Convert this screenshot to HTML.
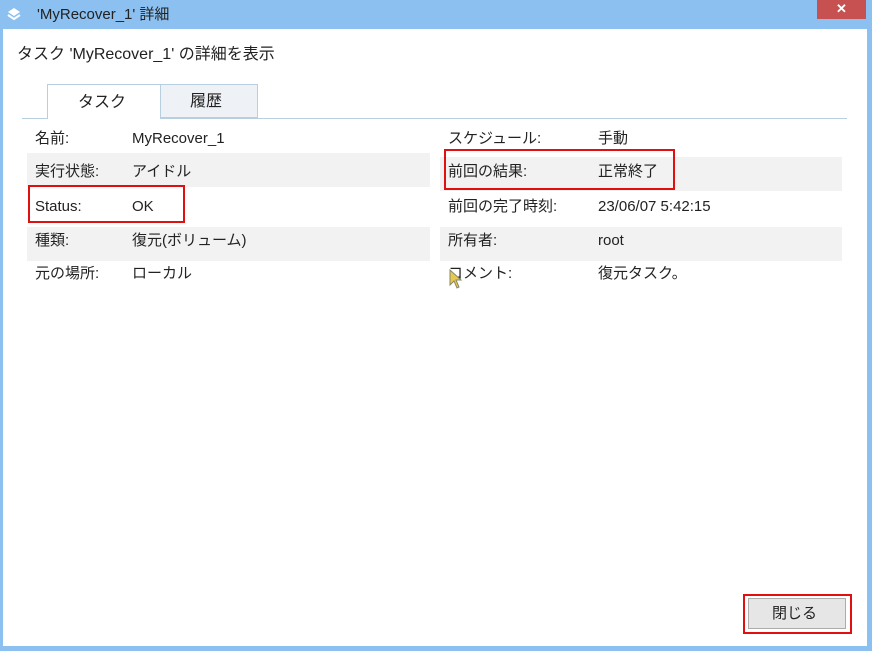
<!DOCTYPE html>
<html><head><meta charset="utf-8"><style>
*{margin:0;padding:0;box-sizing:border-box}
body{width:872px;height:651px;background:#8cc0f0;position:relative;overflow:hidden;font-family:"Liberation Sans","Noto Sans CJK JP",sans-serif;color:#222}
.abs{position:absolute}
#client{left:3px;top:29px;width:864px;height:617px;background:#fff}
.t{position:absolute;font-size:15px;white-space:nowrap;line-height:18px}
.row{position:absolute;height:34px}
.g{background:#f2f2f2}
.red{position:absolute;border:2px solid #e01010}
</style></head><body>
<svg class="abs" style="left:6px;top:6px" width="16" height="16" viewBox="0 0 16 16"><path d="M8 2 L14 6 L8 10 L2 6Z" fill="#fff"/><path d="M2 9 L8 13 L14 9" stroke="#fff" stroke-width="2" fill="none"/></svg>
<div class="t" style="left:37px;top:6px;color:#222">'MyRecover_1' 詳細</div>
<div class="abs" style="left:817px;top:0;width:49px;height:19px;background:#c75050;color:#fff;text-align:center;font-size:13px;line-height:18px;font-weight:bold">✕</div>
<div class="abs" id="client"></div>
<div class="t" style="left:17px;top:46px;font-size:16px">タスク 'MyRecover_1' の詳細を表示</div>
<div class="abs" style="left:22px;top:118px;width:825px;height:1px;background:#b8cfe0"></div>
<div class="abs" style="left:47px;top:84px;width:114px;height:35px;border:1px solid #b8cfe0;border-bottom:none;background:#fff"></div>
<div class="abs" style="left:160px;top:84px;width:98px;height:34px;border:1px solid #b8cfe0;background:#eef2f7"></div>
<div class="t" style="left:78px;top:94px;font-size:16px">タスク</div>
<div class="t" style="left:190px;top:93px;font-size:16px">履歴</div>

<div class="row g" style="left:27px;top:153px;width:403px"></div>
<div class="row g" style="left:27px;top:227px;width:403px"></div>
<div class="row g" style="left:440px;top:157px;width:402px"></div>
<div class="row g" style="left:440px;top:227px;width:402px"></div>

<div class="t" style="left:35px;top:130px">名前:</div><div class="t" style="left:132px;top:130px">MyRecover_1</div>
<div class="t" style="left:35px;top:163px">実行状態:</div><div class="t" style="left:132px;top:163px">アイドル</div>
<div class="t" style="left:35px;top:198px">Status:</div><div class="t" style="left:132px;top:198px">OK</div>
<div class="t" style="left:35px;top:232px">種類:</div><div class="t" style="left:132px;top:232px">復元(ボリューム)</div>
<div class="t" style="left:35px;top:265px">元の場所:</div><div class="t" style="left:132px;top:265px">ローカル</div>

<div class="t" style="left:448px;top:130px">スケジュール:</div><div class="t" style="left:598px;top:130px">手動</div>
<div class="t" style="left:448px;top:163px">前回の結果:</div><div class="t" style="left:598px;top:163px">正常終了</div>
<div class="t" style="left:448px;top:198px">前回の完了時刻:</div><div class="t" style="left:598px;top:198px">23/06/07 5:42:15</div>
<div class="t" style="left:448px;top:232px">所有者:</div><div class="t" style="left:598px;top:232px">root</div>
<div class="t" style="left:448px;top:265px">コメント:</div><div class="t" style="left:598px;top:265px">復元タスク。</div>
<svg class="abs" style="left:449px;top:269px" width="16" height="22" viewBox="0 0 16 22"><path d="M1 1 L1 16 L5 12 L8 19 L10 18 L7 11 L12 11Z" fill="#e8c850" stroke="#886" stroke-width="1"/></svg>

<div class="red" style="left:28px;top:185px;width:157px;height:38px"></div>
<div class="red" style="left:444px;top:149px;width:231px;height:41px"></div>

<div class="abs" style="left:748px;top:598px;width:98px;height:31px;background:#e6e6e6;border:1px solid #acacac"></div>
<div class="t" style="left:772px;top:605px;font-size:15px">閉じる</div>
<div class="red" style="left:743px;top:594px;width:109px;height:40px"></div>
</body></html>
